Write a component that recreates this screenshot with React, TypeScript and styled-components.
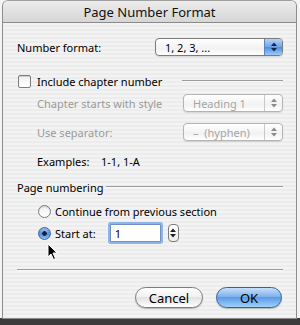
import React from 'react'
import styled, { createGlobalStyle } from 'styled-components'

const GlobalStyle = createGlobalStyle`
  html, body {
    margin: 0;
    padding: 0;
  }
  body {
    width: 300px;
    height: 325px;
    overflow: hidden;
    background: linear-gradient(to bottom, #f4f4f4 0, #f4f4f4 318px, #3c3c3c 318px);
    font-family: "Noto Sans", "DejaVu Sans", sans-serif;
    font-size: 11px;
    color: #000;
  }
`

const Window = styled.div`
  position: relative;
  margin-left: 2px;
  width: 293px;
  height: 317px;
  border: 1px solid #8c8c8c;
  border-top-color: #a0a0a0;
  border-radius: 6px 6px 0 0;
  overflow: hidden;
  background: repeating-linear-gradient(to bottom, #ececec 0, #ececec 2px, #f3f3f3 2px, #f3f3f3 4px);
`

const TitleBar = styled.div`
  height: 21px;
  display: flex;
  align-items: center;
  justify-content: center;
  border-bottom: 1px solid #8a8a8a;
  background: linear-gradient(to bottom, #ececec, #d6d6d6);
  font-size: 13px;
  color: #111;
`

const Content = styled.div`
  display: flex;
  flex-direction: column;
  padding: 0 13px 0 14px;
`

const Row = styled.div<{ top: number; h: number; indent?: number }>`
  display: flex;
  align-items: center;
  height: ${({ h }) => h}px;
  margin-top: ${({ top }) => top}px;
  padding-left: ${({ indent }) => indent || 0}px;
`

const Label = styled.span<{ disabled?: boolean; w?: number }>`
  color: ${({ disabled }) => (disabled ? '#9a9a9a' : '#000')};
  white-space: nowrap;
  ${({ w }) => (w ? `width: ${w}px;` : '')}
`

const Rule = styled.div<{ gap: number }>`
  flex: 1;
  height: 0;
  margin-left: ${({ gap }) => gap}px;
  border-top: 1px solid #9a9a9a;
  border-bottom: 1px solid #fafafa;
`

const Popup = styled.div<{ w: number; disabled?: boolean }>`
  margin-left: auto;
  width: ${({ w }) => w}px;
  height: 16px;
  display: flex;
  align-items: stretch;
  border: 1px solid ${({ disabled }) => (disabled ? '#b4b4b4' : '#7c7c7c')};
  border-radius: 4px;
  overflow: hidden;
  background: linear-gradient(to bottom, #ffffff, #f2f2f2 60%, #ffffff);
  box-shadow: 0 1px 1px rgba(0, 0, 0, 0.12);
`

const PopupText = styled.span<{ disabled?: boolean }>`
  flex: 1;
  display: flex;
  align-items: center;
  padding-left: 9px;
  font-size: 11px;
  color: ${({ disabled }) => (disabled ? '#a6a6a6' : '#000')};
`

const PopupArrows = styled.div<{ blue?: boolean }>`
  width: 17px;
  display: flex;
  align-items: center;
  justify-content: center;
  border-left: 1px solid ${({ blue }) => (blue ? '#5d84c0' : '#c8c8c8')};
  background: ${({ blue }) =>
    blue ? 'linear-gradient(to bottom, #b6d3f6, #6ea5e8 50%, #4d8ee0 51%, #9ccaf6)' : 'transparent'};
`

const Arrows = ({ color }: { color: string }) => (
  <svg width="6" height="10" viewBox="0 0 6 10">
    <path d="M0 4 L3 0.5 L6 4 Z" fill={color} />
    <path d="M0 6 L3 9.5 L6 6 Z" fill={color} />
  </svg>
)

const CheckBox = styled.div`
  width: 11px;
  height: 11px;
  border: 1px solid #7d7d7d;
  border-radius: 2px;
  background: linear-gradient(to bottom, #f0f0f0, #ffffff);
  box-shadow: inset 0 1px 1px rgba(0, 0, 0, 0.15);
  margin-right: 6px;
`

const Radio = styled.div<{ checked?: boolean }>`
  width: 11px;
  height: 11px;
  border-radius: 50%;
  border: 1px solid ${({ checked }) => (checked ? '#3e66a8' : '#7d7d7d')};
  background: ${({ checked }) =>
    checked
      ? 'radial-gradient(circle at 50% 50%, #10203a 0, #10203a 2px, transparent 2.5px), linear-gradient(to bottom, #a8cbf3, #4f8fe0 55%, #8fc0f2)'
      : 'linear-gradient(to bottom, #eeeeee, #ffffff)'};
  box-shadow: inset 0 1px 1px rgba(0, 0, 0, 0.15);
  margin-right: 4px;
`

const NumberField = styled.div`
  width: 45px;
  height: 16px;
  margin-left: 14px;
  display: flex;
  align-items: center;
  padding-left: 4px;
  background: #fff;
  border: 1px solid #6f8fc0;
  box-shadow: 0 0 0 2px #8fb4e6;
  border-radius: 1px;
  font-size: 11px;
`

const Stepper = styled.div`
  width: 9px;
  height: 16px;
  margin-left: 7px;
  display: flex;
  align-items: center;
  justify-content: center;
  border: 1px solid #7d7d7d;
  border-radius: 4px;
  background: linear-gradient(to bottom, #ffffff, #ececec);
`

const Footer = styled.div`
  display: flex;
  justify-content: flex-end;
  gap: 13px;
  margin-top: 16px;
  padding-right: 1px;
`

const Button = styled.div<{ primary?: boolean; w: number }>`
  width: ${({ w }) => w}px;
  height: 19px;
  display: flex;
  align-items: center;
  justify-content: center;
  border-radius: 11px;
  font-size: 13px;
  color: #000;
  border: 1px solid ${({ primary }) => (primary ? '#3d5f97' : '#7c7c7c')};
  background: ${({ primary }) =>
    primary
      ? 'linear-gradient(to bottom, #c8e0fa 0, #7fb2ec 45%, #5c9be6 50%, #9fd0fb 100%)'
      : 'linear-gradient(to bottom, #ffffff 0, #f2f2f2 45%, #e2e2e2 50%, #ffffff 100%)'};
  box-shadow: 0 1px 1px rgba(0, 0, 0, 0.25);
`

const Cursor = styled.svg`
  position: absolute;
  left: 44px;
  top: 242px;
`

export default function App() {
  return (
    <>
      <GlobalStyle />
      <Window>
        <TitleBar>Page Number Format</TitleBar>
        <Content>
          <Row top={15} h={18}>
            <Label>Number format:</Label>
            <Popup w={126}>
              <PopupText>1, 2, 3, ...</PopupText>
              <PopupArrows blue>
                <Arrows color="#14284a" />
              </PopupArrows>
            </Popup>
          </Row>

          <Row top={18} h={14} indent={1}>
            <CheckBox />
            <Label>Include chapter number</Label>
            <Rule gap={20} />
          </Row>

          <Row top={6} h={18} indent={20}>
            <Label disabled>Chapter starts with style</Label>
            <Popup w={98} disabled>
              <PopupText disabled>Heading 1</PopupText>
              <PopupArrows>
                <Arrows color="#8a8a8a" />
              </PopupArrows>
            </Popup>
          </Row>

          <Row top={11} h={18} indent={20}>
            <Label disabled>Use separator:</Label>
            <Popup w={98} disabled>
              <PopupText disabled>–&nbsp;&nbsp;(hyphen)</PopupText>
              <PopupArrows>
                <Arrows color="#8a8a8a" />
              </PopupArrows>
            </Popup>
          </Row>

          <Row top={12} h={16} indent={20}>
            <Label w={64}>Examples:</Label>
            <Label>1-1, 1-A</Label>
          </Row>

          <Row top={11} h={14}>
            <Label>Page numbering</Label>
            <Rule gap={3} />
          </Row>

          <Row top={10} h={14} indent={21}>
            <Radio />
            <Label>Continue from previous section</Label>
          </Row>

          <Row top={5} h={20} indent={21}>
            <Radio checked />
            <Label>Start at:</Label>
            <NumberField>1</NumberField>
            <Stepper>
              <Arrows color="#222" />
            </Stepper>
          </Row>

          <Row top={26} h={2}>
            <Rule gap={0} />
          </Row>

          <Footer>
            <Button w={66}>Cancel</Button>
            <Button w={64} primary>
              OK
            </Button>
          </Footer>
        </Content>
        <Cursor width="12" height="18" viewBox="0 0 12 18">
          <path d="M1 1 L1 14 L4 11 L6.5 16.5 L8.5 15.5 L6 10 L10 10 Z" fill="#000" stroke="#fff" strokeWidth="1" />
        </Cursor>
      </Window>
    </>
  )
}
